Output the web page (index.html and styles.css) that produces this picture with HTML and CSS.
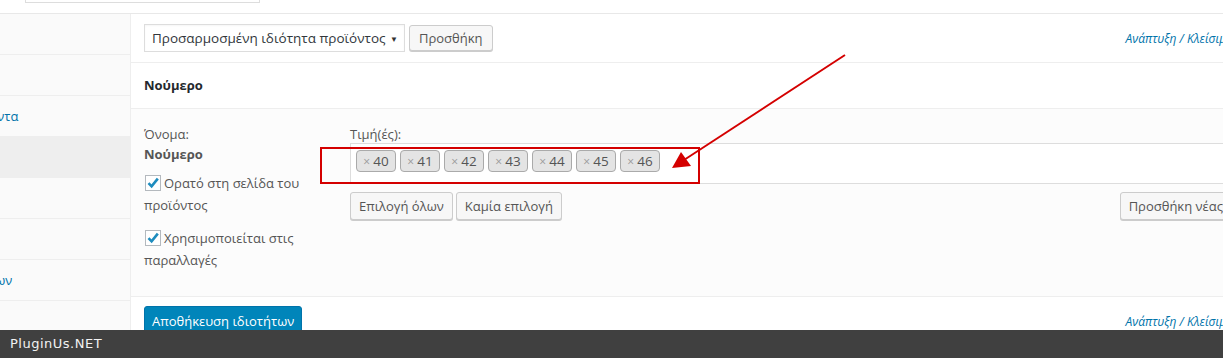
FILE: index.html
```html
<!DOCTYPE html>
<html lang="el">
<head>
    <meta charset="UTF-8">
    <title>Ιδιότητες προϊόντος</title>
    <link rel="stylesheet" href="styles.css">
</head>
<body>

    <div class="topbar">
        <input type="text" class="top-search">
    </div>

    <div class="panel">
        <!-- Καρτέλες δεδομένων προϊόντος -->
        <ul class="tabs">
            <li><a href="#">Γενικά</a></li>
            <li><a href="#">Απόθεμα</a></li>
            <li><a href="#">Συνδεδεμένα προϊόντα</a></li>
            <li class="active"><a href="#">Ιδιότητες</a></li>
            <li><a href="#">Αποστολή</a></li>
            <li><a href="#">Προχωρημένα</a></li>
            <li><a href="#">Προσαρμογή φίλτρων</a></li>
            <li></li>
        </ul>

        <div class="main">
            <div class="toolbar">
                <div class="select-box">
                    <span>Προσαρμοσμένη ιδιότητα προϊόντος</span>
                    <span class="caret">&#9660;</span>
                </div>
                <button class="btn">Προσθήκη</button>
                <a href="#" class="expand">Ανάπτυξη / Κλείσιμο</a>
            </div>

            <div class="attr-head">Νούμερο</div>

            <div class="attr-body">
                <div class="attr-name">
                    <div class="label">Όνομα:</div>
                    <div class="name">Νούμερο</div>
                    <label class="check">
                        <span class="box"><svg viewBox="0 0 16 16" width="16" height="16"><path d="M3.5 8.2 L6.6 11.4 L12.8 3.6" fill="none" stroke="#1e8cbe" stroke-width="2.6"/></svg></span>Ορατό στη σελίδα του προϊόντος
                    </label>
                    <label class="check">
                        <span class="box"><svg viewBox="0 0 16 16" width="16" height="16"><path d="M3.5 8.2 L6.6 11.4 L12.8 3.6" fill="none" stroke="#1e8cbe" stroke-width="2.6"/></svg></span>Χρησιμοποιείται στις παραλλαγές
                    </label>
                </div>

                <div class="attr-values">
                    <div class="label">Τιμή(ές):</div>
                    <div class="values-box">
                        <span class="tag"><i>×</i>40</span>
                        <span class="tag"><i>×</i>41</span>
                        <span class="tag"><i>×</i>42</span>
                        <span class="tag"><i>×</i>43</span>
                        <span class="tag"><i>×</i>44</span>
                        <span class="tag"><i>×</i>45</span>
                        <span class="tag"><i>×</i>46</span>
                    </div>
                    <div class="value-actions">
                        <button class="btn">Επιλογή όλων</button>
                        <button class="btn">Καμία επιλογή</button>
                        <button class="btn btn-new">Προσθήκη νέας</button>
                    </div>
                </div>
            </div>

            <div class="save-row">
                <button class="btn-primary">Αποθήκευση ιδιοτήτων</button>
                <a href="#" class="expand">Ανάπτυξη / Κλείσιμο</a>
            </div>
        </div>
    </div>

    <!-- Σημείωση πάνω στο στιγμιότυπο -->
    <div class="highlight"></div>
    <svg class="arrow" width="1223" height="358" viewBox="0 0 1223 358">
        <line x1="845" y1="55" x2="684" y2="160" stroke="#d40000" stroke-width="2"/>
        <polygon points="672,168 681,152 691,166" fill="#d40000"/>
    </svg>

    <div class="footer">PluginUs.NET</div>

</body>
</html>
```

FILE: styles.css
```css
body {
    margin: 0;
    font-family: "Open Sans", Arial, sans-serif;
    font-size: 13px;
    color: #444;
    background-color: #fff;
    overflow: hidden;
}
.topbar {
    display: flow-root;
    height: 13px;
    border-bottom: 1px solid #e8e8e8;
}
.top-search {
    display: block;
    width: 235px;
    height: 28px;
    margin: -25px 0 0 25px;
    border: 1px solid #ddd;
    box-sizing: border-box;
}
.panel {
    display: flex;
    height: 344px;
}
/* Barra lateral */
.tabs {
    list-style: none;
    margin: 0;
    padding: 0;
    width: 130px;
    flex-shrink: 0;
    background-color: #fafafa;
    border-right: 1px solid #eee;
    overflow: hidden;
}
.tabs li {
    height: 40px;
    border-bottom: 1px solid #eee;
    display: flex;
    align-items: center;
}
.tabs li.active {
    background-color: #eee;
}
.tabs a {
    margin-left: -122px;
    white-space: nowrap;
    color: #0073aa;
    text-decoration: none;
}
.main {
    flex: 1;
    min-width: 0;
}
.toolbar {
    display: flex;
    align-items: center;
    gap: 4px;
    height: 48px;
    padding: 0 0 0 13px;
    border-bottom: 1px solid #eee;
}
.select-box {
    display: flex;
    align-items: center;
    justify-content: space-between;
    width: 261px;
    height: 28px;
    box-sizing: border-box;
    padding: 0 6px 0 7px;
    border: 1px solid #ddd;
    font-size: 13.5px;
    white-space: nowrap;
    color: #32373c;
    box-shadow: inset 0 1px 2px rgba(0, 0, 0, 0.04);
}
.caret {
    font-size: 8px;
    color: #333;
}
.btn {
    height: 28px;
    padding: 0 8px;
    background-color: #f7f7f7;
    border: 1px solid #ccc;
    border-radius: 3px;
    box-shadow: 0 1px 0 #ccc;
    color: #555;
    font-family: inherit;
    font-size: 13px;
    box-sizing: border-box;
}
.toolbar .btn {
    height: 26px;
    padding: 0 9px;
}
.expand {
    margin-left: auto;
    margin-right: -10px;
    font-size: 12px;
    font-style: italic;
    color: #0073aa;
    text-decoration: none;
    white-space: nowrap;
}
.attr-head {
    height: 45px;
    line-height: 45px;
    padding-left: 13px;
    font-weight: bold;
    color: #23282d;
    border-bottom: 1px solid #eee;
}
.attr-body {
    display: flex;
    height: 188px;
    padding: 15px 0 0 13px;
    box-sizing: border-box;
    background-color: #fcfcfc;
    border-bottom: 1px solid #eee;
}
.attr-name {
    width: 206px;
    flex-shrink: 0;
}
.label {
    color: #555;
    line-height: 20px;
}
.name {
    font-weight: bold;
    color: #555;
    line-height: 20px;
    margin-bottom: 2px;
}
.check {
    display: block;
    width: 160px;
    line-height: 22px;
    padding-top: 6px;
    color: #555;
}
.check + .check {
    padding-top: 11px;
}
.box {
    display: inline-block;
    width: 16px;
    height: 16px;
    margin: 0 3px 0 1px;
    vertical-align: -3px;
    border: 1px solid #b4b9be;
    box-sizing: border-box;
    background-color: #fff;
    line-height: 0;
}
.box svg {
    margin: -1px 0 0 -1px;
}
.attr-values {
    flex: 1;
}
.values-box {
    display: flex;
    gap: 4px;
    height: 41px;
    box-sizing: border-box;
    margin-top: -1px;
    padding: 6px 0 0 5px;
    background-color: #fff;
    border: 1px solid #ddd;
    border-right: none;
}
.tag {
    width: 40px;
    height: 22px;
    line-height: 20px;
    text-align: center;
    box-sizing: border-box;
    background-color: #e4e4e4;
    border: 1px solid #aaa;
    border-radius: 4px;
    color: #555;
    font-size: 13.5px;
}
.tag i {
    font-style: normal;
    font-size: 12px;
    color: #999;
    margin-right: 3px;
}
.value-actions {
    display: flex;
    gap: 3px;
    margin-top: 8px;
}
.btn-new {
    margin-left: auto;
    margin-right: -9px;
}
.save-row {
    display: flex;
    align-items: flex-start;
    padding: 9px 0 0 13px;
}
.btn-primary {
    height: 30px;
    padding: 0 7px;
    background-color: #0085ba;
    border: 1px solid #0073aa;
    border-radius: 3px;
    color: #fff;
    font-family: inherit;
    font-size: 13px;
}
.save-row .expand {
    margin-top: 7px;
}
/* Anotación */
.highlight {
    position: absolute;
    left: 320px;
    top: 147px;
    width: 380px;
    height: 37px;
    box-sizing: border-box;
    border: 2px solid #d40000;
}
.arrow {
    position: absolute;
    left: 0;
    top: 0;
}
.footer {
    position: fixed;
    left: 0;
    right: 0;
    bottom: 0;
    height: 28px;
    line-height: 28px;
    padding-left: 10px;
    background-color: #404040;
    color: #f2f2f2;
    font-family: "DejaVu Sans", sans-serif;
    font-size: 13px;
    letter-spacing: 0.5px;
}
```
